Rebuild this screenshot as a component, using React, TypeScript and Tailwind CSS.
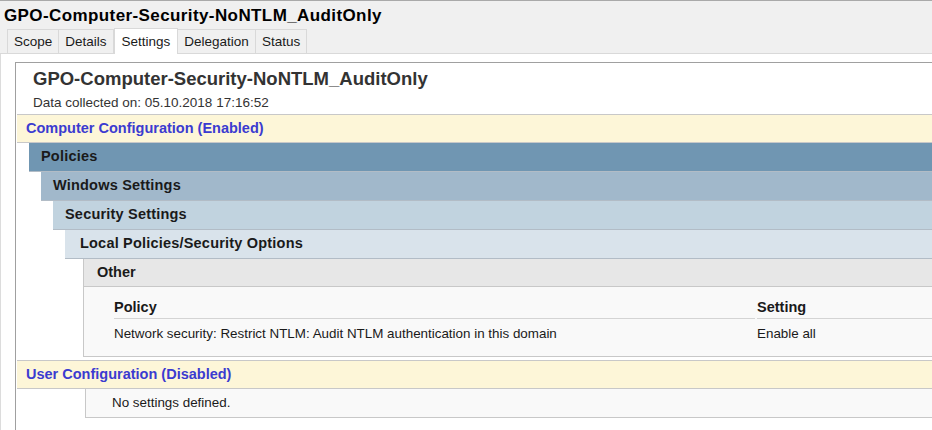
import React from 'react';

const tabs = ['Scope', 'Details', 'Settings', 'Delegation', 'Status'];

// nested heading bars, each one shifted right a little
const levels = [
  { label: 'Policies', bg: 'bg-[#7096b2]', pad: 'pl-[12px]' },
  { label: 'Windows Settings', bg: 'bg-[#a1b8cb]', pad: 'pl-[12px]' },
  { label: 'Security Settings', bg: 'bg-[#c1d3df]', pad: 'pl-[12px]' },
  { label: 'Local Policies/Security Options', bg: 'bg-[#d9e3eb]', pad: 'pl-[15px]' },
];

function ConfigBar({ label }: { label: string }) {
  return (
    <div className="h-[29px] flex items-center pl-[9px] bg-[#fdf6d8] border-y border-[#c8c8c8] text-[14.5px] text-[#3b3bd0] font-bold">
      {label}
    </div>
  );
}

export default function App() {
  return (
    <div
      className="w-[932px] h-[430px] overflow-hidden bg-[#f0f0f0] border-t border-[#a9a9a9] text-[#1a1a1a]"
      style={{ fontFamily: '"Liberation Sans", Arial, sans-serif' }}
    >
      <div className="h-[27px] pl-[4px] pt-[2px] text-[17px] font-bold text-black tracking-[0.4px]">
        GPO-Computer-Security-NoNTLM_AuditOnly
      </div>

      <div className="flex items-end h-[26px] pl-[7px] border-b border-[#d9d9d9]">
        {tabs.map((t) =>
          t === 'Settings' ? (
            <div
              key={t}
              className="h-[26px] -mb-px px-[7px] pt-[1px] flex items-center bg-white border border-b-0 border-[#d9d9d9] text-[13.5px]"
            >
              {t}
            </div>
          ) : (
            <div
              key={t}
              className="h-[24px] px-[6px] pt-[2px] flex items-center border border-b-0 border-[#d9d9d9] -ml-px first:ml-0 text-[13.5px]"
            >
              {t}
            </div>
          )
        )}
      </div>

      <div className="bg-white h-[400px] pt-[8px] pl-[14px] border-l border-[#dcdcdc]">
        <div className="h-full bg-white border-t border-l border-[#a0a0a0]">
          <div className="pl-[17px] pt-[5px] h-[51px]">
            <div className="text-[18.5px] font-bold text-[#333] leading-[22px]">
              GPO-Computer-Security-NoNTLM_AuditOnly
            </div>
            <div className="text-[13.5px] text-[#333] mt-[3px]">Data collected on: 05.10.2018 17:16:52</div>
          </div>

          <div className="pl-[1px]">
            <ConfigBar label="Computer Configuration (Enabled)" />
            <div className="pl-[12px]">
              <Level idx={0} />
            </div>

            <div className="mt-[3px]">
              <ConfigBar label="User Configuration (Disabled)" />
            </div>
            <div className="ml-[68px] h-[29px] flex items-center pl-[26px] bg-[#f9f9f9] border-b border-l border-[#c8c8c8] text-[13.4px]">
              No settings defined.
            </div>
          </div>
        </div>
      </div>
    </div>
  );
}

function Level({ idx }: { idx: number }) {
  if (idx >= levels.length) {
    return (
      <div className="ml-[18px] border-l border-[#c8c8c8]">
        <div className="h-[28px] flex items-center pl-[13px] bg-[#e7e7e7] border-b border-[#c8c8c8] text-[14.5px] font-bold">
          Other
        </div>
        <div className="bg-[#f9f9f9] border-b border-[#c8c8c8] pt-[10px] pb-[6px] pl-[30px]">
          <div className="flex h-[22px] items-center text-[14.5px] font-bold">
            <div className="w-[641px] h-full flex items-center border-b border-[#d4d4d4] mr-[2px]">Policy</div>
            <div className="flex-1 h-full flex items-center border-b border-[#d4d4d4]">Setting</div>
          </div>
          <div className="flex h-[31px] items-center text-[13.4px]">
            <div className="w-[643px]">Network security: Restrict NTLM: Audit NTLM authentication in this domain</div>
            <div className="flex-1">Enable all</div>
          </div>
        </div>
      </div>
    );
  }
  const l = levels[idx];
  return (
    <div>
      <div className={`h-[29px] flex items-center ${l.pad} ${l.bg} border-b border-[#b2bcc6] text-[14.5px] font-bold tracking-[0.2px]`}>
        {l.label}
      </div>
      <div className={idx === levels.length - 1 ? '' : 'pl-[12px]'}>
        <Level idx={idx + 1} />
      </div>
    </div>
  );
}
